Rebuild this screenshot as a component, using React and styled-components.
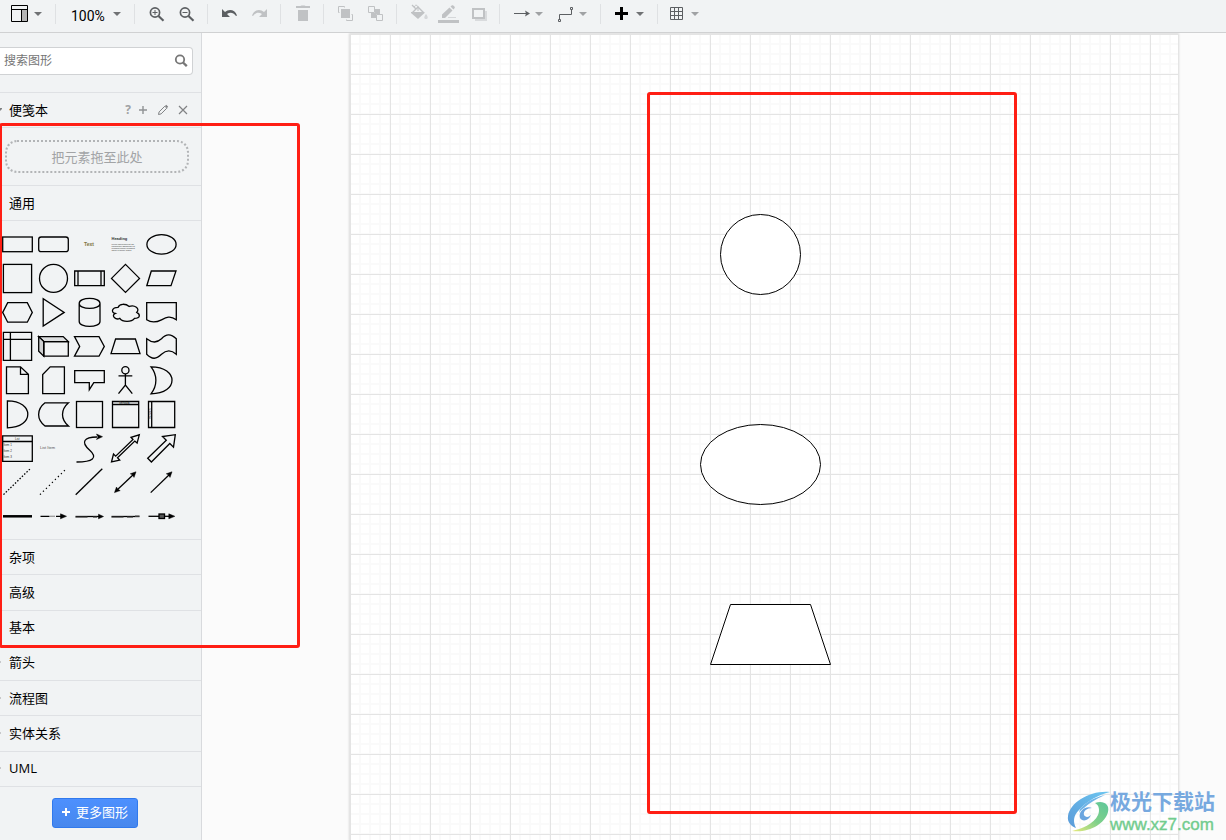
import React from 'react';
import styled, { createGlobalStyle } from 'styled-components';

const GlobalStyle = createGlobalStyle`
  *, *::before, *::after { box-sizing: border-box; }
  html, body, #root { height: 100%; }
  body {
    margin: 0;
    overflow: hidden;
    background: #fbfbfb;
    color: #000;
    font: 13px/20px "Open Sans", "Noto Sans CJK SC", sans-serif;
  }
  button, input { font: inherit; color: inherit; }
`;

const Shell = styled.div`
  position: relative;
  display: flex;
  flex-direction: column;
  height: 100%;
  min-height: 840px;
`;

/* ---------- toolbar ---------- */

const Toolbar = styled.header`
  display: flex;
  flex: none;
  height: 33px;
  padding-top: 2px;
  background: #f1f3f4;
  border-bottom: 1px solid #d0d1d2;
`;

const Group = styled.div`
  position: relative;
  display: flex;
  flex: none;
  padding: 0 7px 0 ${(p) => p.$lead || 6}px;
  &:not(:last-child)::after {
    content: "";
    position: absolute;
    right: 0;
    top: 2px;
    width: 1px;
    height: 20px;
    background: #dfe1e3;
  }
`;

const ToolButton = styled.button`
  display: flex;
  align-items: center;
  justify-content: ${(p) => (p.$menu ? 'flex-start' : 'center')};
  gap: 1px;
  width: ${(p) => (p.$menu ? 44 : 30)}px;
  height: 24px;
  padding: 0 0 0 ${(p) => (p.$menu ? 3 : 0)}px;
  border: 0;
  background: none;
  color: ${(p) => (p.$muted ? '#c0c2c4' : '#5c5f62')};
`;

const ZoomLevel = styled.button`
  display: flex;
  align-items: center;
  justify-content: space-between;
  width: 66px;
  height: 24px;
  padding: 4px 6px 0 9px;
  border: 0;
  background: none;
  font: 14px/20px Roboto, sans-serif;
  svg { margin-bottom: 4px; }
`;

const Icon = ({ children, w = 24, h = 24 }) => (
  <svg width={w} height={h} viewBox={`0 0 ${w} ${h}`} fill="none" aria-hidden="true">
    {children}
  </svg>
);

const Caret = ({ color = '#a0a2a4' }) => (
  <Icon w={10} h={10}>
    <path d="M1 3h8L5 7z" fill={color} />
  </Icon>
);

const Magnifier = ({ plus }) => (
  <Icon>
    <circle cx="11" cy="10.5" r="4.6" stroke="currentColor" strokeWidth="1.7" />
    <path d="M14.5 14l5 4.700" stroke="currentColor" strokeWidth="2.2" />
    <path d={plus ? 'M8.500 10.500h5M11 8v5' : 'M8.500 10.500h5'} stroke="currentColor" />
  </Icon>
);

const UndoArrow = () => (
  <path d="M5 7v8h8l-3-3c3-2 6-2 9 2l1-.5C18 7.500 12 6.500 8 10z" fill="currentColor" />
);

/* ---------- sidebar ---------- */

const Body = styled.div`
  display: flex;
  flex: 1;
  min-height: 0;
`;

const Sidebar = styled.aside`
  display: flex;
  flex-direction: column;
  flex: none;
  width: 202px;
  background: #f1f3f4;
  border-right: 1px solid #d8dadd;
`;

const SearchArea = styled.div`
  padding: 14px 8px 17px 0;
  border-bottom: 1px solid #dfe1e4;
`;

const SearchBox = styled.label`
  display: flex;
  align-items: center;
  height: 28px;
  padding: 0 4px;
  background: #fff;
  border: 1px solid #d0d2d4;
  border-left: 0;
  border-radius: 0 4px 4px 0;
`;

const SearchInput = styled.input`
  flex: 1;
  min-width: 0;
  padding: 0;
  border: 0;
  outline: 0;
  background: none;
  font-size: 12px;
  &::placeholder { color: #757575; opacity: 1; }
`;

const SectionHeader = styled.div`
  display: flex;
  align-items: center;
  justify-content: space-between;
  flex: ${(p) => (p.$grow ? '1' : 'none')};
  height: 35px;
  padding: 0 8px 1px 0;
  border-bottom: 1px solid #dfe1e4;
`;

const SectionTitle = styled.button`
  display: flex;
  align-items: center;
  gap: 7px;
  margin-left: -8px;
  padding: 0;
  border: 0;
  background: none;
  svg { flex: none; }
`;

const HeaderActions = styled.div`
  display: flex;
`;

const HeaderButton = styled.button`
  display: flex;
  align-items: center;
  justify-content: center;
  width: ${(p) => (p.$narrow ? 10 : 20)}px;
  height: 20px;
  padding: 0;
  border: 0;
  background: none;
  color: ${(p) => (p.$narrow ? '#a0a2a4' : '#808284')};
  font: bold 12px/20px "Open Sans", sans-serif;
`;

const ScratchArea = styled.div`
  padding: 12px 12px 12px 5px;
  border-bottom: 1px solid #dfe1e4;
`;

const DropZone = styled.div`
  display: flex;
  align-items: center;
  justify-content: center;
  height: 33px;
  border: 2px dotted #b2b4b6;
  border-radius: 12px;
  color: #a2a4a6;
`;

const Palette = styled.div`
  display: grid;
  grid-template-columns: repeat(5, 36px);
  grid-auto-rows: 34px;
  padding: 6px 0;
  border-bottom: 1px solid #dfe1e4;
`;

const PaletteItem = styled.button`
  display: block;
  padding: 0;
  border: 0;
  background: none;
  svg { display: block; }
`;

const ShapeStroke = styled.g`
  fill: none;
  stroke: #000;
  stroke-width: 1.3;
  text { stroke: none; fill: #333; }
`;

const Footer = styled.div`
  display: flex;
  justify-content: center;
  flex: none;
  padding: 11px 12px 12px 0;
`;

const MoreButton = styled.button`
  display: flex;
  align-items: center;
  justify-content: center;
  gap: 5px;
  width: 86px;
  height: 30px;
  padding: 0 0 1px;
  border: 1px solid #3079ed;
  border-radius: 3px;
  background: linear-gradient(#4d90fe, #4787ed);
  color: #fff;
`;

const Disclosure = ({ open }) => (
  <Icon w={10} h={10}>
    {open ? <path d="M3 3h8l-4 4z" fill="#808284" /> : <path d="M4 1l5 4-5 4z" fill="#808284" />}
  </Icon>
);

/* Palette drawings, each in a 36 x 34 cell. */
const SHAPES = [
  ['矩形', <rect x="2.7" y="10" width="29.6" height="14.7" />],
  ['圆角矩形', <rect x="2.7" y="10" width="29.6" height="14.7" rx="2.5" />],
  ['文本', <text x="12" y="19" fontSize="5" fontWeight="bold" fill="#7d7440">Text</text>],
  ['文本框', (
    <g>
      <text x="3.5" y="13" fontSize="4" fontWeight="bold">Heading</text>
      <g fontSize="2">
        <text x="3.5" y="18">Lorem ipsum dolor sit am</text>
        <text x="3.5" y="20">consectetur adipisicing elit,</text>
        <text x="3.5" y="22">eiusmod tempor incididunt</text>
        <text x="3.5" y="24">labore et dolore aliqua</text>
      </g>
    </g>
  )],
  ['椭圆', <ellipse cx="17.5" cy="17.4" rx="14.6" ry="9.7" />],

  ['正方形', <rect x="3.4" y="3.4" width="28.2" height="28.2" />],
  ['圆', <circle cx="17.5" cy="17.4" r="14" />],
  ['过程', <path d="M2.700 10h29.600v14.700h-29.600zM6 10v14.700M29 10v14.700" />],
  ['菱形', <path d="M17.500 3.400l14 14-14 14-14-14z" />],
  ['平行四边形', <path d="M7.300 10h24.700l-5 14.700h-24.200z" />],

  ['六边形', <path d="M2.700 17.400l5-9.800h19.600l5 9.800-5 9.800H7.700z" />],
  ['三角形', <path d="M7.200 3.800v27.200l21-13.600z" />],
  ['圆柱体', <path d="M7.200 8.400c0-6.600 20.800-6.600 20.800 0v18c0 6.600-20.800 6.600-20.800 0zM7.200 8.400c0 6.600 20.800 6.600 20.800 0" />],
  ['云', <path d="M10 12.400C4 12.400 2.500 17.400 7.300 18.400C2.500 20.600 7.900 25.400 11.800 23.400C14.500 27.400 23.500 27.400 26.500 23.400C32.500 23.400 32.500 19.400 28.700 17.400C32.500 13.400 26.500 9.400 21.200 11.400C17.500 8.400 11.500 8.400 10 12.400z" />],
  ['文档', <path d="M2.700 7.600h29.600v17.200c-6-4.500-10-2.500-14.800 0-5 2.500-9.500 3.500-14.800 0z" />],

  ['内部存储', <path d="M3.400 3.400h28.200v28H3.400zM3.400 10.400h28.200M10.400 3.400v28" />],
  ['立方体', (
    <>
      <path d="M2.700 7.600h24.500l5.100 5H8z" fill="#dcdedf" />
      <path d="M2.700 7.600l5.100 5v14.600l-5.100-5z" fill="#cfd1d2" />
      <path d="M7.800 12.600h24.500v14.600H7.800z" />
    </>
  )],
  ['步骤', <path d="M2.500 7.600h24.500l5.300 9.800-5.300 9.800H2.500l5.200-9.800z" />],
  ['梯形', <path d="M3 24.600L7.600 10h19.800L32 24.600z" />],
  ['带', <path d="M2.700 9.800c5 4 10 4.500 14.800 0 5-5.500 9.500-5 14.800 0v15.500c-5-4.500-10-4.500-14.800 0-5 5-9.500 5.500-14.800 0z" />],

  ['注释', <path d="M6.500 3.800h14l7.900 7.600v19.300H6.500zM20.500 3.800v7.600h7.900" />],
  ['卡片', <path d="M14.200 3.800h14.200v26.900H6.700V11.600z" />],
  ['标注', <path d="M2.700 7.700h29.600v12H21.800l-4.500 7v-7H2.700z" />],
  ['角色', (
    <>
      <circle cx="17.4" cy="7.3" r="3.6" />
      <path d="M17.400 11v11M10.500 12.800h13.800M10.500 30.700l6.900-8.700 6.900 8.700" />
    </>
  )],
  ['或', <path d="M7 3.800c28 0 28 27 0 27 6.500-8 6.500-19 0-27z" />],

  ['与', <path d="M7.400 3.800c27.200 0 27.200 27 0 27z" />],
  ['数据存储', <path d="M9 5.800h23.500c-8 7-8 16.500 0 23.200H9c-8.500-6.500-8.500-16.500 0-23.200z" />],
  ['容器', <rect x="4.5" y="4.5" width="26" height="26" />],
  ['垂直容器', (
    <>
      <path d="M4.500 4.500h26.200v26H4.500zM4.500 7.500h26.200" />
      <text x="11" y="7" fontSize="3" fontWeight="bold">Vertical</text>
    </>
  )],
  ['水平容器', (
    <>
      <path d="M4.500 4.500h26.200v26H4.500zM7.700 4.500v26" />
      <text transform="translate(7 22) rotate(-90)" fontSize="3">Horizon</text>
    </>
  )],

  ['列表', (
    <>
      <path d="M2.700 4.800h29.600v25.500H2.700zM2.700 10.500h29.600" />
      <text x="15" y="8.5" fontSize="3">List</text>
      <g fontSize="3">
        <text x="3.5" y="15">Item 1</text>
        <text x="3.5" y="21">Item 2</text>
        <text x="3.5" y="27">Item 3</text>
      </g>
    </>
  )],
  ['列表项', <text x="4" y="18" fontSize="4" fill="#555">List Item</text>],
  ['曲线', (
    <>
      <path d="M4.500 31c16 0 22-4 13-12S12 6 25 6" />
      <path d="M30.500 5.700l-6-2.700 1.500 3-1.500 2.500z" fill="#000" strokeWidth="0.5" />
    </>
  )],
  ['双向箭头', <path d="M3.500 31l2-8 2.200 2.200L25 8.500l-2-2.200 8.300-2.500-2.200 8.300-2.300-2L9.500 26.800l2.200 2.300z" />],
  ['箭头', <path d="M3.700 27.200L22.300 9.200l-3.800-3.700L31.300 3.700l-1.800 12.500-3.700-3.700L7.400 31z" />],

  ['虚线', <path d="M3.500 29.600L30 4" strokeDasharray="1.5 1.7" />],
  ['点线', <path d="M4 29.600L29 5" strokeDasharray="1.2 3" />],
  ['线', <path d="M3.700 29.800L30.300 3.700" />],
  ['双向连接线', (
    <>
      <path d="M8 26L26.500 8.500" />
      <path d="M6.500 27.600l2-5.600 1.200 2.300 2.500 1.300zM28 6.800l-2 5.600-1.200-2.300-2.500-1.300z" fill="#000" strokeWidth="0.5" />
    </>
  )],
  ['定向连接线', (
    <>
      <path d="M6.700 27.600L26.500 8.500" />
      <path d="M28 6.800l-2 5.600-1.200-2.300-2.500-1.300z" fill="#000" strokeWidth="0.5" />
    </>
  )],

  ['链接', <path d="M3 17.300h29" strokeWidth="2.5" />],
  ['带标签的连接', (
    <>
      <path d="M4.500 17.300h9M20 17.300h6" />
      <path d="M14 17.300h5" stroke="#999" />
      <path d="M30.500 17.300l-6-2.500v5z" fill="#000" strokeWidth="0.5" />
    </>
  )],
  ['双标签连接', (
    <>
      <path d="M3.500 17.500h24" />
      <path d="M3.500 18.400h12M21 18.400h4" stroke="#777" />
      <path d="M31.500 17.500l-5-2.300v4.600z" fill="#000" strokeWidth="0.5" />
    </>
  )],
  ['三标签连接', (
    <>
      <path d="M3.500 17.500h28" />
      <path d="M3.500 18.400h12M19 18.400h6M27 16.800h4.500" stroke="#777" />
    </>
  )],
  ['带符号的连接', (
    <>
      <path d="M4.500 17.300h21" />
      <rect x="15" y="15" width="5.5" height="4.5" fill="#555" />
      <path d="M30.800 17.300l-6-2.500v5z" fill="#000" strokeWidth="0.5" />
    </>
  )],
];

const CATEGORIES = ['杂项', '高级', '基本', '箭头', '流程图', '实体关系', 'UML'];

/* ---------- canvas ---------- */

const Canvas = styled.main`
  display: flex;
  flex: 1;
  min-width: 0;
  padding: 1px 48px 0 148px;
  background: #fbfbfb;
  overflow: hidden;
`;

const Page = styled.div`
  position: relative;
  flex: 1;
  background-color: #fff;
  background-image:
    linear-gradient(90deg, #e4e4e4 1px, transparent 1px),
    linear-gradient(#e4e4e4 1px, transparent 1px),
    linear-gradient(90deg, #fafafa 2px, transparent 2px),
    linear-gradient(#fafafa 2px, transparent 2px);
  background-size: 40px 40px, 40px 40px, 10px 10px, 10px 10px;
  background-position: 0 0, 0 0, -1px -1px, -1px -1px;
  box-shadow: 0 0 2px 1px #dadada;
`;

const Node = styled.svg`
  position: absolute;
  left: ${(p) => p.$x}px;
  top: ${(p) => p.$y}px;
  fill: #fff;
  stroke: #000;
`;

const Frame = styled.div`
  position: absolute;
  z-index: 2;
  left: ${(p) => p.$x}px;
  top: ${(p) => p.$y}px;
  width: ${(p) => p.$w}px;
  height: ${(p) => p.$h}px;
  border: 3px solid #ff1e14;
  border-radius: 3px;
  pointer-events: none;
`;

/* ---------- watermark ---------- */

const Watermark = styled.div`
  position: absolute;
  z-index: 3;
  right: 11px;
  bottom: 6px;
  display: flex;
  align-items: flex-end;
`;

const WatermarkText = styled.div`
  display: flex;
  flex-direction: column;
  margin-left: -1px;
`;

const SiteName = styled.span`
  color: #77a9df;
  font: bold 21px/30px "Noto Sans CJK SC", sans-serif;
`;

const SiteLink = styled.a`
  color: #72cc8e;
  font: 17px/19px "Liberation Sans", sans-serif;
  -webkit-text-stroke: 0.4px #72cc8e;
  text-decoration: none;
`;

export default function App() {
  return (
    <Shell>
      <GlobalStyle />
      <Toolbar>
        <Group $lead={5}>
          <ToolButton $menu aria-label="视图">
            <Icon>
              <path d="M14 8h5v11h-5z" fill="#b4b4b4" />
              <path d="M3.500 3.500h16v16h-16zM3.500 7.500h16M13.500 7.500v12" stroke="#000" />
            </Icon>
            <Caret color="#707274" />
          </ToolButton>
        </Group>
        <Group>
          <ZoomLevel>
            100%
            <Caret color="#707274" />
          </ZoomLevel>
        </Group>
        <Group>
          <ToolButton aria-label="放大"><Magnifier plus /></ToolButton>
          <ToolButton aria-label="缩小"><Magnifier /></ToolButton>
        </Group>
        <Group>
          <ToolButton aria-label="撤销"><Icon><UndoArrow /></Icon></ToolButton>
          <ToolButton $muted aria-label="重做">
            <Icon><g transform="matrix(-1 0 0 1 25 0)"><UndoArrow /></g></Icon>
          </ToolButton>
        </Group>
        <Group>
          <ToolButton $muted aria-label="删除">
            <Icon><path d="M6 4h4.500l1-.5h3l1 .5H20v2H6zM8 8h10v11H8z" fill="currentColor" /></Icon>
          </ToolButton>
        </Group>
        <Group>
          <ToolButton $muted aria-label="移至最前">
            <Icon>
              <path d="M8 7h9v9H8z" fill="currentColor" />
              <path d="M11.500 5.500v-1h-6v6h1M18.500 12.500h1v6h-6v-1" stroke="currentColor" />
            </Icon>
          </ToolButton>
          <ToolButton $muted aria-label="移至最后">
            <Icon>
              <path d="M12 7h5v5h-4v4H8v-5h4z" fill="currentColor" />
              <path d="M5.500 4.500h6v6h-6zM13.500 12.500h6v6h-6z" stroke="currentColor" />
            </Icon>
          </ToolButton>
        </Group>
        <Group>
          <ToolButton $muted aria-label="填充颜色">
            <Icon>
              <path d="M6 3l4 4" stroke="currentColor" strokeWidth="1.3" />
              <path d="M6 11l6-6 5.700 5.700" stroke="currentColor" strokeWidth="1.4" />
              <path d="M5 10h13.500v1L12 17l-7-6z" fill="currentColor" />
              <path d="M20 12c3 4 1.500 5 0 5s-3-1 0-5z" fill="#d5d7d9" />
              <path d="M8.500 5.500C8 2.500 12 2.500 12 5.500V9" stroke="currentColor" />
            </Icon>
          </ToolButton>
          <ToolButton $muted aria-label="线条颜色">
            <Icon>
              <path d="M6 16v-3.500l7.500-7 3 3L9 16zM14.500 4.600l1.500-1.300c1-.6 3.500 1.700 2.700 2.700l-1.300 1.500z" fill="currentColor" />
              <path d="M12 15.500h8" stroke="#d5d7d9" />
              <path d="M2 18h21v3H2z" fill="currentColor" />
            </Icon>
          </ToolButton>
          <ToolButton $muted aria-label="阴影">
            <Icon>
              <path d="M9 9h12v10H9z" fill="#d9dbdd" />
              <path d="M7 7h11v9H7z" fill="#f1f3f4" stroke="currentColor" strokeWidth="2" />
            </Icon>
          </ToolButton>
        </Group>
        <Group>
          <ToolButton $menu aria-label="连接">
            <Icon>
              <path d="M5 11.500h12" stroke="currentColor" />
              <path d="M16 8.500l5 3-5 3 1-3z" fill="currentColor" />
            </Icon>
            <Caret />
          </ToolButton>
          <ToolButton $menu aria-label="航点">
            <Icon>
              <path d="M6.500 17v-4.500h12V8" stroke="currentColor" />
              <path d="M5.500 17.500h2v2h-2zM17.500 5.500h2v2h-2z" stroke="currentColor" />
            </Icon>
            <Caret />
          </ToolButton>
        </Group>
        <Group>
          <ToolButton $menu aria-label="插入">
            <Icon><path d="M10 5h3v5h5v3h-5v5h-3v-5H5v-3h5z" fill="#000" /></Icon>
            <Caret color="#707274" />
          </ToolButton>
        </Group>
        <Group $lead={4}>
          <ToolButton $menu aria-label="表格">
            <Icon>
              <path d="M5.500 5.500h12v12h-12zM9.500 5.500v12M13.500 5.500v12M5.500 9.500h12M5.500 13.500h12" stroke="currentColor" />
            </Icon>
            <Caret />
          </ToolButton>
        </Group>
      </Toolbar>

      <Body>
        <Sidebar>
          <SearchArea>
            <SearchBox>
              <SearchInput type="text" placeholder="搜索图形" aria-label="搜索图形" />
              <Icon w={14} h={14}>
                <circle cx="6" cy="5.5" r="4.2" stroke="#777" strokeWidth="1.8" />
                <path d="M9 8.500l3.800 3.600" stroke="#777" strokeWidth="2.4" />
              </Icon>
            </SearchBox>
          </SearchArea>

          <SectionHeader>
            <SectionTitle><Disclosure open />便笺本</SectionTitle>
            <HeaderActions>
              <HeaderButton $narrow aria-label="帮助">?</HeaderButton>
              <HeaderButton aria-label="添加">
                <Icon w={10} h={10}><path d="M5 1v8M1 5h8" stroke="#909294" strokeWidth="1.4" /></Icon>
              </HeaderButton>
              <HeaderButton aria-label="编辑">
                <Icon w={12} h={12}>
                  <path d="M1.500 10.500l.6-2.600 5.700-5.700 2 2-5.700 5.700z" stroke="currentColor" />
                  <path d="M8 2l1.200-1.200 2 2L10 4z" fill="currentColor" />
                </Icon>
              </HeaderButton>
              <HeaderButton aria-label="关闭">
                <Icon w={10} h={10}><path d="M1 1l8 8M9 1l-8 8" stroke="currentColor" strokeWidth="1.2" /></Icon>
              </HeaderButton>
            </HeaderActions>
          </SectionHeader>
          <ScratchArea>
            <DropZone>把元素拖至此处</DropZone>
          </ScratchArea>

          <SectionHeader>
            <SectionTitle><Disclosure open />通用</SectionTitle>
          </SectionHeader>
          <Palette>
            {SHAPES.map(([name, drawing]) => (
              <PaletteItem key={name} aria-label={name}>
                <svg
                  width="36"
                  height="34"
                  viewBox="0 0 36 34"
                  fontFamily="Liberation Sans, sans-serif"
                >
                  {drawing.type === 'text' ? drawing : <ShapeStroke>{drawing}</ShapeStroke>}
                </svg>
              </PaletteItem>
            ))}
          </Palette>

          {CATEGORIES.map((name) => (
            <SectionHeader key={name} $grow>
              <SectionTitle><Disclosure />{name}</SectionTitle>
            </SectionHeader>
          ))}
          <Footer>
            <MoreButton>
              <Icon w={10} h={10}><path d="M5 1v8M1 5h8" stroke="#fff" strokeWidth="2" /></Icon>
              更多图形
            </MoreButton>
          </Footer>
        </Sidebar>

        <Canvas>
          <Page>
            <Node $x={370} $y={180} width="81" height="81">
              <circle cx="40.5" cy="40.5" r="40" />
            </Node>
            <Node $x={350} $y={390} width="121" height="81">
              <ellipse cx="60.5" cy="40.5" rx="60" ry="40" />
            </Node>
            <Node $x={360} $y={570} width="122" height="61">
              <path d="M.5 60.500l20-60h80l20 60z" />
            </Node>
            <Frame $x={297} $y={58} $w={370} $h={722} />
          </Page>
        </Canvas>
      </Body>

      <Frame $x={-1} $y={123} $w={301} $h={525} />

      <Watermark>
        <svg width="44" height="44" viewBox="0 0 44 44" aria-hidden="true">
          <defs>
            <linearGradient id="swooshBlue" x1="0" y1="1" x2="1" y2="0">
              <stop offset="0" stopColor="#5b9bd9" />
              <stop offset="1" stopColor="#6cc6f0" />
            </linearGradient>
            <linearGradient id="swooshGreen" x1="0" y1="1" x2="1" y2="0">
              <stop offset="0" stopColor="#e8ea7c" />
              <stop offset="0.5" stopColor="#7fd08a" />
              <stop offset="1" stopColor="#5cc69a" />
            </linearGradient>
          </defs>
          <path d="M43 2C24 0 3 12 1 26c-1 6 3 10 8 12-3-6-3-12 3-18C20 11 31 5 43 2z" fill="url(#swooshBlue)" />
          <path d="M24 25c-2 6-9 7-11 3-2-6 5-13 12-10-5 0-9 3-8 7 1 2 4 3 7 0z" fill="#6aa5df" />
          <path d="M28 13c8-3 15 1 13 9-3 12-19 21-36 19 9-2 22-7 26-16 2-5 1-10-3-12z" fill="url(#swooshGreen)" />
          <path d="M13 19C20 11 29 7 38 5c-9 4-16 8-21 13-2 1-4 3-5 5z" fill="#6fb4e6" />
        </svg>
        <WatermarkText>
          <SiteName>极光下载站</SiteName>
          <SiteLink href="#">www.xz7.com</SiteLink>
        </WatermarkText>
      </Watermark>
    </Shell>
  );
}
